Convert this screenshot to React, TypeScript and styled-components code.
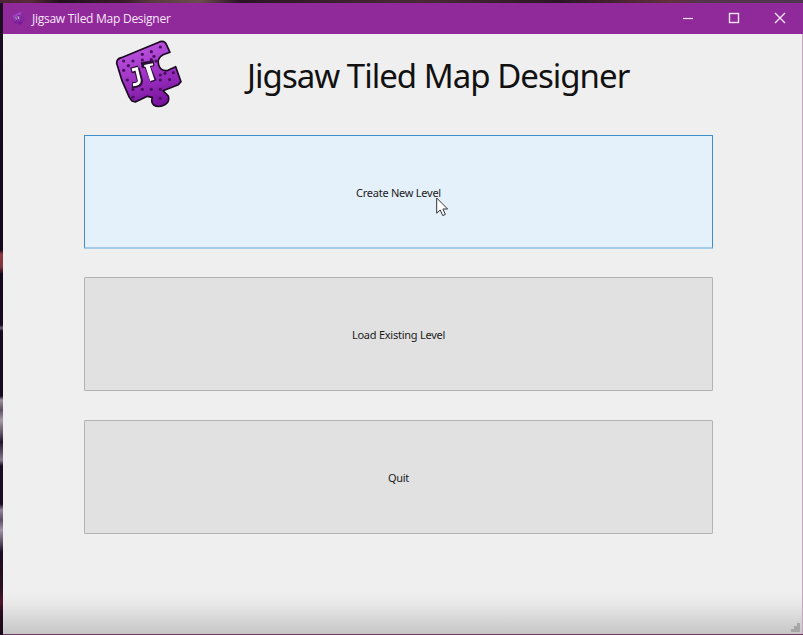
import React from "react";
import styled, { createGlobalStyle } from "styled-components";

const GlobalStyle = createGlobalStyle`
  html, body { margin: 0; padding: 0; }
  body { overflow: hidden; background: #1a0b1c; }
  * { box-sizing: border-box; }
`;

const Desktop = styled.div`
  width: 803px;
  height: 635px;
  padding: 3px 1px 1px 3px;
  background:
    linear-gradient(90deg, #4d2436 0, #5a2a38 30px, #21101f 60px, #3a1c2c 125px, #593840 150px, #6d4b50 200px, #2a1424 240px, #4a2a38 420px, #2b1525 560px, #63303f 670px, #54344a 700px, #503650 803px) 0 0 / 803px 3px no-repeat,
    linear-gradient(180deg, #1c0b20 0, #14081a 250px, #8d3a40 254px, #7c333b 267px, #14081a 274px, #180b1f 325px, #6d6070 328px, #180b1f 331px, #180b1f 396px, #9a909e 400px, #5c5062 410px, #a59ba8 420px, #5b4d60 434px, #241428 442px, #85798a 460px, #1b0c20 466px, #1b0c20 504px, #91879a 510px, #5b4f62 520px, #a096a6 530px, #4c3d50 545px, #1b0c20 552px, #2c1224 590px, #51162a 602px, #260c20 612px, #170a1c 635px) 0 0 / 3px 635px no-repeat,
    linear-gradient(#6d365f, #6d365f) 0 634px / 803px 1px no-repeat,
    linear-gradient(180deg, #90299a 34px, #c9a3c3 34px);
`;

const Window = styled.main`
  height: 631px;
  display: flex;
  flex-direction: column;
  background: linear-gradient(180deg, #efefef 0, #efefef 590px, #e7e7e7 602px, #c6c6c6 631px);
`;

const TitleBar = styled.header`
  height: 31px;
  flex: none;
  display: flex;
  align-items: center;
  padding-left: 8px;
  background: #90299a;
  color: #f7e6f8;
`;

const WindowTitle = styled.span`
  flex: 1;
  margin-left: 6px;
  font: 12px/16px "Open Sans", "Noto Sans", sans-serif;
  letter-spacing: -0.26px;
  white-space: nowrap;
`;

const Controls = styled.div`
  display: flex;
  margin-right: -1px;
`;

const ControlButton = styled.button`
  width: 46px;
  height: 31px;
  padding: 0 0 1px;
  border: 0;
  display: grid;
  place-items: center;
  background: transparent;
  color: #fae6fb;
`;

const Body = styled.div`
  position: relative;
  flex: 1;
`;

const Heading = styled.div`
  height: 101px;
  display: flex;
  padding: 2px 0 0 107px;
`;

const AppName = styled.h1`
  margin: 18px 0 0 57px;
  font: 400 33px/44px "Noto Sans", "Open Sans", sans-serif;
  letter-spacing: -0.98px;
  white-space: nowrap;
  color: #111;
`;

const Menu = styled.nav`
  width: 629px;
  margin-left: 81px;
  display: grid;
  grid-auto-rows: 114px;
  row-gap: 28.4px;
`;

const MenuButton = styled.button<{ $active?: boolean }>`
  padding: 2px 0 0;
  border: 1px solid ${(p) => (p.$active ? "#3d8ec9" : "#b3b3b3")};
  border-bottom: ${(p) => (p.$active ? "2px solid #a4cdea" : "1px solid #b3b3b3")};
  border-radius: 1px;
  background: ${(p) => (p.$active ? "#e4f0fa" : "#e1e1e1")};
  color: #1c1c1c;
  font: 11px/16px "Noto Sans", "Open Sans", sans-serif;
  letter-spacing: -0.25px;
`;

const Pointer = styled.svg`
  position: absolute;
  left: 433px;
  top: 163px;
`;

const SizeGrip = styled.svg`
  position: absolute;
  right: 2px;
  bottom: 2px;
`;

const studs: [number, number][] = [
  [124, 47], [151, 33], [97, 55], [41, 75], [69, 75], [124, 71], [132, 61],
  [41, 103], [55, 89], [138, 75], [151, 117], [179, 131], [165, 112],
  [69, 160], [97, 160], [124, 160], [151, 160], [69, 183], [151, 187],
  [190, 110], [52, 132], [151, 132], [97, 72],
];

function PuzzleLogo({ size, outline = "#1c0a22" }: { size: number; outline?: string }) {
  const id = `piece${size}`;
  return (
    <svg width={size} height={size * 0.95} viewBox="0 0 240 228" aria-hidden="true">
      <defs>
        <linearGradient id={id} x1="0.2" y1="0" x2="0.5" y2="1">
          <stop offset="0" stopColor="#c05be3" />
          <stop offset="0.45" stopColor="#a63acb" />
          <stop offset="1" stopColor="#79139f" />
        </linearGradient>
      </defs>
      <path
        d="M20 82 Q20 68 34 65 L150 17 Q164 13 169 25 L180 49 L159 56 Q140 67 146 87 Q152 107 174 103 L197 92 L213 137 L205 146 L159 164 L175 180 Q180 198 163 207 Q144 216 131 207 Q122 197 127 184 L112 181 L76 198 L66 195 L58 184 L36 134 Z"
        fill={`url(#${id})`}
        stroke={outline}
        strokeWidth="5"
        strokeLinejoin="round"
      />
      <g fill="#491060">
        {studs.map(([x, y]) => (
          <circle key={`${x}-${y}`} cx={x} cy={y} r="4.8" />
        ))}
      </g>
      <g fill="none" stroke="#2c1036" strokeWidth="18">
        <path d="M63 104 L86 97 M80 98 L90 134 Q91 148 66 147" />
        <path d="M94 88 L132 82 M111 88 L131 136" />
      </g>
      <g fill="none" stroke="#fff">
        <path d="M66 102 L84 97 M80 99 L88 133 Q89 145 69 146" strokeWidth="9" />
        <path d="M103 90 L129 85" strokeWidth="6" />
        <path d="M112 88 L127 133" strokeWidth="13" />
      </g>
    </svg>
  );
}

export default function App() {
  return (
    <>
      <GlobalStyle />
      <Desktop>
        <Window>
          <TitleBar>
            <PuzzleLogo size={15} outline="#4d2472" />
            <WindowTitle>Jigsaw Tiled Map Designer</WindowTitle>
            <Controls>
              <ControlButton aria-label="Minimize">
                <svg width="12" height="12" viewBox="0 0 12 12" stroke="currentColor">
                  <path d="M1 6.5H11" strokeWidth="1.2" />
                </svg>
              </ControlButton>
              <ControlButton aria-label="Maximize">
                <svg width="12" height="12" viewBox="0 0 12 12" stroke="currentColor" fill="none">
                  <rect x="1.5" y="1.5" width="9" height="9" strokeWidth="1.4" />
                </svg>
              </ControlButton>
              <ControlButton aria-label="Close">
                <svg width="12" height="12" viewBox="0 0 12 12" stroke="currentColor">
                  <path d="M1 1L11 11M11 1L1 11" strokeWidth="1.4" />
                </svg>
              </ControlButton>
            </Controls>
          </TitleBar>
          <Body>
            <Heading>
              <PuzzleLogo size={80} />
              <AppName>Jigsaw Tiled Map Designer</AppName>
            </Heading>
            <Menu>
              <MenuButton $active>Create New Level</MenuButton>
              <MenuButton>Load Existing Level</MenuButton>
              <MenuButton>Quit</MenuButton>
            </Menu>
            <Pointer width="13" height="21" viewBox="0 0 13 21" aria-hidden="true">
              <path
                d="M0.7 1V16.2L4.2 13L6.8 18.6L9.4 17.4L6.9 12H11.6Z"
                fill="#fff"
                stroke="#333"
                strokeWidth="1"
              />
            </Pointer>
            <SizeGrip width="9" height="9" viewBox="0 0 9 9" fill="#a6a6a6" aria-hidden="true">
              <path d="M6 0h3v9H0V6h3V3h3Z" />
            </SizeGrip>
          </Body>
        </Window>
      </Desktop>
    </>
  );
}
